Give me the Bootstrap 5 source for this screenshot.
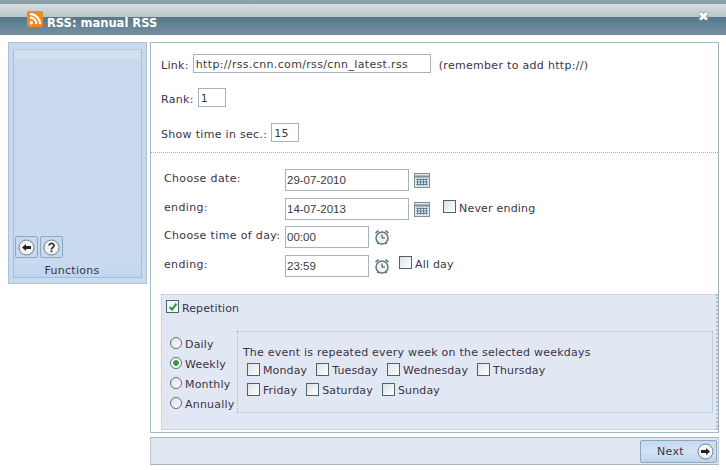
<!DOCTYPE html>
<html lang="en">
<head>
  <meta charset="UTF-8" />
  <meta name="viewport" content="width=device-width, initial-scale=1" />
  <title>RSS: manual RSS</title>
  <link href="https://cdn.jsdelivr.net/npm/bootstrap@5.3.0/dist/css/bootstrap.min.css" rel="stylesheet">
  <style>
    body {
      background-color: #fff;
      font-family: "DejaVu Sans", Verdana, sans-serif;
      font-size: 11px;
      line-height: 14px;
      letter-spacing: .3px;
      color: #3b3346;
      width: 726px;
      height: 470px;
      overflow: hidden;
    }
    .win-title {
      height: 35px;
      padding: 9px 17px 0 27px;
      border-top: 4px solid #8ba1a9;
      margin-bottom: 7px;
      background: linear-gradient(#d6dcdc 0, #bcc6c8 13px, #55788a 13px, #7590a0 31px);
      color: #fff;
      font-weight: 700;
      font-size: 11.5px;
      letter-spacing: 0;
    }
    .title-text { margin-top: 3px; margin-left: 4px; }
    .title-logo { margin-top: -2px; }
    .win-close { margin-top: -3px; font-size: 13px; line-height: 14px; text-shadow: 0 0 2px #44606f; }
    .win-body { padding-left: 8px; gap: 3px; }
    .side-panel {
      width: 139px;
      height: 242px;
      padding: 6px 4px 5px;
      background: #c9daee;
      border: 1px solid #a9c2d8;
    }
    .side-inner {
      height: 100%;
      border: 1px solid #a3bedb;
      border-top-color: #b8cde0;
    }
    .side-top { flex: 1; background: linear-gradient(#d3e0f0 0, #d3e0f0 8px, #c9daee 9px); padding: 0 0 4px 1px; gap: 2px; }
    .side-label {
      height: 15px;
      padding: 2px 11px 0 0;
      text-align: center;
      font-size: 11px;
      line-height: 14px;
      background: linear-gradient(#c9daee, #bcd7f0);
    }
    .tool-btn {
      width: 23px;
      height: 22px;
      padding: 0;
      border: 1px solid #8fa9c4;
      border-radius: 2px;
      background: #c6d8ec;
    }
    .main-col { width: 569px; }
    .main-panel {
      height: 391px;
      margin-bottom: 4px;
      border: 1px solid #a3b9c4;
      border-right-color: #9fb0ba;
      padding-bottom: 1px;
    }
    .top-part {
      height: 110px;
      padding: 11px 10px 0;
      border-bottom: 1px dotted #a2b2bc;
    }
    .field {
      height: 19px;
      padding: 2px 2px 0;
      border: 1px solid #a6b4b8;
      background: #fff;
      color: #3a3a3a;
      font: 11px "DejaVu Sans", Verdana, sans-serif;
      letter-spacing: .35px;
      border-radius: 0;
      outline: none;
    }
    .field-tall {
      height: 22px;
      padding: 1px;
      font: 11.5px "Liberation Sans", Arial, sans-serif;
      letter-spacing: 0;
    }
    .w-link { width: 238px; margin: 0 8px 0 4px; }
    .w-num { width: 28px; margin-left: 4px; }
    .w-date { width: 124px; }
    .w-time { width: 84px; }
    .top-row { height: 19px; margin-bottom: 16px; }
    .top-row.tight { margin-bottom: 15px; }
    .top-text { padding-top: 4px; }
    .date-part { padding: 16px 0 0 13px; height: 141px; }
    .date-row { height: 22px; margin-bottom: 7px; }
    .date-row.tight { margin-bottom: 6px; }
    .date-label { width: 121px; white-space: nowrap; padding-bottom: 2px; letter-spacing: .35px; }
    .ico-slot { margin-left: 5px; }
    .tick {
      appearance: none;
      width: 13px;
      height: 13px;
      margin: 0 3px 0 0;
      flex: none;
      border: 1px solid #4b6472;
      background: linear-gradient(135deg, #dfe1e3, #fff);
      border-radius: 0;
      vertical-align: top;
    }
    .tick:checked {
      background: #f2f5f4 url("data:image/svg+xml,%3Csvg xmlns='http://www.w3.org/2000/svg' viewBox='0 0 12 12'%3E%3Cpath d='M2 6l3 3 5-7' fill='none' stroke='%2322943c' stroke-width='2.4'/%3E%3C/svg%3E") center/10px no-repeat;
    }
    .pick {
      appearance: none;
      width: 12px;
      height: 12px;
      margin: 0 3px 0 0;
      flex: none;
      border: 1px solid #5b6c76;
      border-radius: 50%;
      background: linear-gradient(135deg, #dde0e3, #fff);
    }
    .pick:checked {
      background: radial-gradient(circle, #2f9a4a 0, #2f9a4a 2.5px, #fff 3.2px);
    }
    .never-box { margin: 2px 0 0 13px; letter-spacing: .2px; }
    .allday-box { margin: 1px 0 0 9px; letter-spacing: .2px; }
    .box-text { margin-top: 2px; }
    .rep-panel {
      width: 557px;
      height: 136px;
      margin-left: 10px;
      padding: 5px 3px 0 4px;
      background: #e1e8f4;
      border: 1px dotted #b3c3d3;
      border-right-width: 2px;
    }
    .rep-check { height: 13px; margin-bottom: 18px; letter-spacing: .1px; }
    .rep-text { margin-top: 4px; }
    .rep-body { gap: 2px; }
    .freq-col { width: 69px; padding: 6px 0 0 4px; }
    .freq-item { height: 20px; line-height: 13px; letter-spacing: .2px; }
    .freq-text { padding-top: 1px; }
    .week-box {
      width: 477px;
      height: 82px;
      padding: 14px 5px 0;
      border: 1px dotted #a3b6c6;
    }
    .week-line { height: 14px; margin-bottom: 3px; letter-spacing: .23px; }
    .day-row { height: 20px; padding-left: 4px; }
    .day-item { margin-right: 9px; line-height: 15px; letter-spacing: .15px; }
    .foot-bar {
      height: 28px;
      padding: 2px 1px 0 0;
      background: #e1e8f4;
      border: 1px solid #a3b6c2;
      border-left-color: #b9c8d2;
      border-right-color: #b9c8d2;
    }
    .next-btn {
      width: 77px;
      height: 23px;
      padding: 0 2px 0 16px;
      background: linear-gradient(#c6d9ee, #d4e2f2 50%, #bdd3ea);
      border: 1px solid #8ba6c0;
      border-radius: 2px;
      color: #3b3346;
      font-size: 11px;
      letter-spacing: .3px;
    }
  </style>
</head>
<body>

  <div class="win-title d-flex justify-content-between">
    <div class="d-flex">
      <svg class="title-logo" width="16" height="16" viewBox="0 0 16 16">
        <rect width="16" height="16" rx="2" fill="#ee8a24"/>
        <circle cx="4.3" cy="11.7" r="1.7" fill="#fff"/>
        <path d="M3 6.6a6.4 6.4 0 0 1 6.4 6.4M3 3a10 10 0 0 1 10 10" fill="none" stroke="#fff" stroke-width="2"/>
      </svg>
      <div class="title-text">RSS: manual RSS</div>
    </div>
    <div class="win-close">&#10006;</div>
  </div>

  <div class="win-body d-flex align-items-start">
    <div class="side-panel">
      <div class="side-inner d-flex flex-column">
        <div class="side-top d-flex align-items-end">
          <button class="tool-btn d-flex align-items-center justify-content-center" type="button">
            <svg width="17" height="17" viewBox="0 0 17 17"><circle cx="8.5" cy="8.5" r="7.5" fill="#f2f4f6" stroke="#6f7f8a"/><path d="M4 8.5l4-3.5v2h5v3H8v2z" fill="#222"/></svg>
          </button>
          <button class="tool-btn d-flex align-items-center justify-content-center" type="button">
            <svg width="17" height="17" viewBox="0 0 17 17"><circle cx="8.5" cy="8.5" r="7.5" fill="#f2f4f6" stroke="#6f7f8a"/><path d="M6 6.5a2.5 2.2 0 1 1 3.8 2c-1 .6-1.3 1-1.3 2" fill="none" stroke="#333" stroke-width="1.7"/><rect x="7.6" y="11.4" width="1.8" height="1.8" fill="#333"/></svg>
          </button>
        </div>
        <div class="side-label">Functions</div>
      </div>
    </div>

    <div class="main-col d-flex flex-column">
      <div class="main-panel">
        <div class="top-part">
          <div class="top-row tight d-flex align-items-center">
            <span class="top-text">Link:</span>
            <input class="field w-link" type="text" value="http://rss.cnn.com/rss/cnn_latest.rss">
            <span class="top-text">(remember to add http://)</span>
          </div>
          <div class="top-row d-flex align-items-center">
            <span class="top-text">Rank:</span>
            <input class="field w-num" type="text" value="1">
          </div>
          <div class="top-row d-flex align-items-center">
            <span class="top-text">Show time in sec.:</span>
            <input class="field w-num" type="text" value="15">
          </div>
        </div>

        <div class="date-part">
          <div class="date-row d-flex align-items-center">
            <span class="date-label">Choose date:</span>
            <input class="field field-tall w-date" type="text" value="29-07-2010">
            <span class="ico-slot d-flex">
              <svg width="16" height="15" viewBox="0 0 16 15"><rect x=".5" y=".5" width="15" height="14" fill="#dfe5e8" stroke="#7f8f98"/><path d="M1 3.5h14" stroke="#7f8f98" stroke-width="2"/><path d="M3.5 5.5v7M6.5 5.5v7M9.5 5.5v7M12.5 5.5v7M2.5 6.5h11M2.5 9h11M2.5 11.5h11" stroke="#5f7f92"/></svg>
            </span>
          </div>
          <div class="date-row tight d-flex align-items-center">
            <span class="date-label">ending:</span>
            <input class="field field-tall w-date" type="text" value="14-07-2013">
            <span class="ico-slot d-flex">
              <svg width="16" height="15" viewBox="0 0 16 15"><rect x=".5" y=".5" width="15" height="14" fill="#dfe5e8" stroke="#7f8f98"/><path d="M1 3.5h14" stroke="#7f8f98" stroke-width="2"/><path d="M3.5 5.5v7M6.5 5.5v7M9.5 5.5v7M12.5 5.5v7M2.5 6.5h11M2.5 9h11M2.5 11.5h11" stroke="#5f7f92"/></svg>
            </span>
            <span class="never-box d-flex align-items-start align-self-start"><input class="tick" type="checkbox"><span class="box-text">Never ending</span></span>
          </div>
          <div class="date-row d-flex align-items-center">
            <span class="date-label">Choose time of day:</span>
            <input class="field field-tall w-time" type="text" value="00:00">
            <span class="ico-slot d-flex">
              <svg width="16" height="17" viewBox="0 0 16 17"><path d="M1.5 4l3-2.5M14.500 4l-3-2.500M3.500 15l1-1.500M12.500 15l-1-1.500" stroke="#56646c" stroke-width="1.500"/><circle cx="8" cy="9" r="6" fill="#eef2f3" stroke="#5f7380" stroke-width="1.500"/><path d="M8 5.500V9h3" fill="none" stroke="#39464e"/></svg>
            </span>
          </div>
          <div class="date-row d-flex align-items-center">
            <span class="date-label">ending:</span>
            <input class="field field-tall w-time" type="text" value="23:59">
            <span class="ico-slot d-flex">
              <svg width="16" height="17" viewBox="0 0 16 17"><path d="M1.5 4l3-2.5M14.500 4l-3-2.500M3.500 15l1-1.500M12.500 15l-1-1.500" stroke="#56646c" stroke-width="1.500"/><circle cx="8" cy="9" r="6" fill="#eef2f3" stroke="#5f7380" stroke-width="1.500"/><path d="M8 5.500V9h3" fill="none" stroke="#39464e"/></svg>
            </span>
            <span class="allday-box d-flex align-items-start align-self-start"><input class="tick" type="checkbox"><span class="box-text">All day</span></span>
          </div>
        </div>

        <div class="rep-panel">
          <div class="rep-check d-flex align-items-center">
            <input class="tick" type="checkbox" checked>
            <span class="rep-text">Repetition</span>
          </div>
          <div class="rep-body d-flex">
            <div class="freq-col">
              <div class="freq-item d-flex"><input class="pick" type="radio" name="freq"><span class="freq-text">Daily</span></div>
              <div class="freq-item d-flex"><input class="pick" type="radio" name="freq" checked><span class="freq-text">Weekly</span></div>
              <div class="freq-item d-flex"><input class="pick" type="radio" name="freq"><span class="freq-text">Monthly</span></div>
              <div class="freq-item d-flex"><input class="pick" type="radio" name="freq"><span class="freq-text">Annually</span></div>
            </div>
            <div class="week-box">
              <div class="week-line">The event is repeated every week on the selected weekdays</div>
              <div class="day-row d-flex">
                <span class="day-item d-flex"><input class="tick" type="checkbox">Monday</span>
                <span class="day-item d-flex"><input class="tick" type="checkbox">Tuesday</span>
                <span class="day-item d-flex"><input class="tick" type="checkbox">Wednesday</span>
                <span class="day-item d-flex"><input class="tick" type="checkbox">Thursday</span>
              </div>
              <div class="day-row d-flex">
                <span class="day-item d-flex"><input class="tick" type="checkbox">Friday</span>
                <span class="day-item d-flex"><input class="tick" type="checkbox">Saturday</span>
                <span class="day-item d-flex"><input class="tick" type="checkbox">Sunday</span>
              </div>
            </div>
          </div>
        </div>
      </div>

      <div class="foot-bar d-flex justify-content-end">
        <button class="next-btn d-flex align-items-center justify-content-between" type="button">
          <span>Next</span>
          <svg width="17" height="17" viewBox="0 0 17 17"><circle cx="8.5" cy="8.5" r="7.500" fill="#f2f4f6" stroke="#6f7f8a"/><path d="M13 8.500L9 5v2H4v3h5v2z" fill="#222"/></svg>
        </button>
      </div>
    </div>
  </div>

</body>
</html>
